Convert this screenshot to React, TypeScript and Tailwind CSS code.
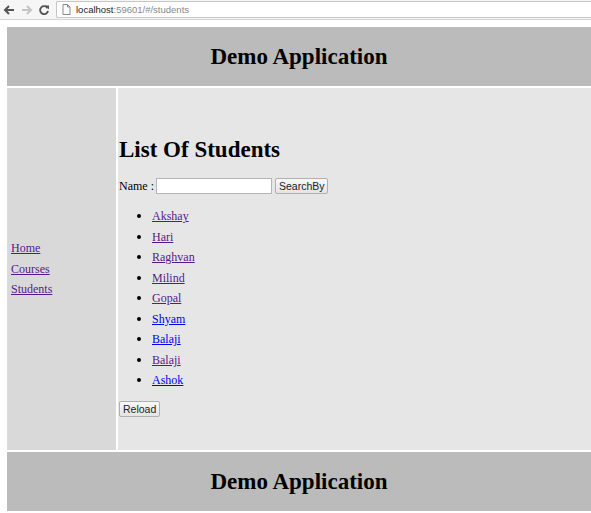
import React from "react";

type Student = { name: string; visited: boolean };

const STUDENTS: Student[] = [
  { name: "Akshay", visited: true },
  { name: "Hari", visited: true },
  { name: "Raghvan", visited: true },
  { name: "Milind", visited: true },
  { name: "Gopal", visited: true },
  { name: "Shyam", visited: false },
  { name: "Balaji", visited: false },
  { name: "Balaji", visited: true },
  { name: "Ashok", visited: false },
];

const NAV = ["Home", "Courses", "Students"];

function BrowserBar() {
  return (
    <div className="flex h-[20px] items-center border-b border-[#d4d4d4] bg-[#f6f6f6]">
      <svg width="12" height="12" viewBox="0 0 12 12" className="ml-[3px]">
        <path d="M11 6H2.5M6 2L2 6l4 4" fill="none" stroke="#555" strokeWidth="2" />
      </svg>
      <svg width="12" height="12" viewBox="0 0 12 12" className="ml-[6px]">
        <path d="M1 6h8.5M6 2l4 4-4 4" fill="none" stroke="#c4c4c4" strokeWidth="2" />
      </svg>
      <svg width="12" height="12" viewBox="0 0 12 12" className="ml-[5px]">
        <path d="M9.6 4.2A4 4 0 1 0 10 7" fill="none" stroke="#555" strokeWidth="1.9" />
        <path d="M7 1.5h4v4z" fill="#555" />
      </svg>
      <div className="ml-[6px] flex h-[17px] flex-1 items-center rounded-l-[2px] border border-r-0 border-[#c6c6c6] bg-white pl-[5px]">
        <svg width="9" height="11" viewBox="0 0 9 11">
          <path d="M1 .5h4.5L8 3v7.5H1z M5.5 .5V3H8" fill="none" stroke="#888" strokeWidth="1" />
        </svg>
        <span className="ml-[5px] font-['Liberation_Sans',Arial,sans-serif] text-[9.5px] leading-none text-[#888]">
          <span className="text-[#222]">localhost</span>:59601/#/students
        </span>
      </div>
    </div>
  );
}

function Banner() {
  return (
    <div className="flex h-[59px] items-center justify-center bg-[#bbbbbb] pt-[1px]">
      <h1 className="text-[23px] font-bold leading-[28px]">Demo Application</h1>
    </div>
  );
}

function Link({ children, visited }: { children: React.ReactNode; visited: boolean }) {
  return (
    <a href="#" className={`underline ${visited ? "text-[#551a8b]" : "text-[#0000ee]"}`}>
      {children}
    </a>
  );
}

const buttonCls =
  "h-[16px] rounded-[2px] border border-[#b0b0b0] bg-gradient-to-b from-[#f8f8f8] to-[#e4e4e4] px-[3px] font-['Liberation_Sans',Arial,sans-serif] text-[10.5px] leading-none text-[#222]";

export default function App() {
  return (
    <div className="h-[513px] overflow-hidden bg-white font-['Liberation_Serif','Times_New_Roman',serif] text-[12px] text-black">
      <BrowserBar />
      <div className="pl-[7px] pt-[7px]">
        <Banner />
        <div className="mt-[2px] flex h-[362px] gap-[2px]">
          <nav className="flex w-[109px] flex-col justify-center bg-[#d9d9d9] pl-[4px]">
            {NAV.map((n) => (
              <div key={n} className="leading-[20.5px]">
                <Link visited>{n}</Link>
              </div>
            ))}
          </nav>
          <main className="flex-1 bg-[#e6e6e6] pl-[1px]">
            <h1 className="mt-[48px] text-[23px] font-bold leading-[28px]">List Of Students</h1>
            <div className="mt-[13px] flex h-[18px] items-center">
              <span>Name :</span>
              <input
                type="text"
                className="ml-[2px] h-[16px] w-[116px] border border-[#b5b5b5] bg-white outline-none"
              />
              <button className={`ml-[3px] w-[53px] ${buttonCls}`}>SearchBy</button>
            </div>
            <ul className="mt-[11px]">
              {STUDENTS.map((s, i) => (
                <li key={i} className="flex h-[20.5px] items-center">
                  <span className="ml-[18px] mr-[11px] h-[4px] w-[4px] rounded-full bg-black" />
                  <Link visited={s.visited}>{s.name}</Link>
                </li>
              ))}
            </ul>
            <button className={`mt-[10.5px] w-[41px] ${buttonCls}`}>Reload</button>
          </main>
        </div>
        <div className="mt-[2px]">
          <Banner />
        </div>
      </div>
    </div>
  );
}
